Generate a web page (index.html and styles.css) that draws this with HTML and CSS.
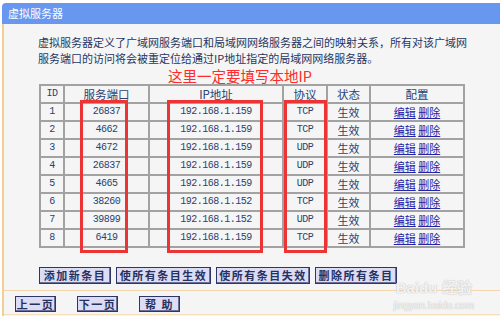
FILE: index.html
```html
<!doctype html>
<html lang="zh-CN">
<head>
  <meta charset="UTF-8">
  <title>虚拟服务器</title>
  <link rel="stylesheet" href="styles.css">
</head>
<body>
  <div class="panel">
    <div class="title">虚拟服务器</div>
    <div class="content">
      <p class="desc">虚拟服务器定义了广域网服务端口和局域网网络服务器之间的映射关系，所有对该广域网<br>服务端口的访问将会被重定位给通过IP地址指定的局域网网络服务器。</p>
      <div class="table-wrap">
        <table class="list">
          <colgroup>
            <col style="width:24px"><col style="width:85px"><col style="width:134px">
            <col style="width:44px"><col style="width:43px"><col style="width:94px">
          </colgroup>
          <tr class="head"><th class="num">ID</th><th>服务端口</th><th>IP地址</th><th>协议</th><th>状态</th><th>配置</th></tr>
          <tr><td class="num">1</td><td class="num">26837</td><td class="num">192.168.1.159</td><td class="num">TCP</td><td>生效</td><td><a href="#">编辑</a> <a href="#">删除</a></td></tr>
          <tr><td class="num">2</td><td class="num">4662</td><td class="num">192.168.1.159</td><td class="num">TCP</td><td>生效</td><td><a href="#">编辑</a> <a href="#">删除</a></td></tr>
          <tr><td class="num">3</td><td class="num">4672</td><td class="num">192.168.1.159</td><td class="num">UDP</td><td>生效</td><td><a href="#">编辑</a> <a href="#">删除</a></td></tr>
          <tr><td class="num">4</td><td class="num">26837</td><td class="num">192.168.1.159</td><td class="num">UDP</td><td>生效</td><td><a href="#">编辑</a> <a href="#">删除</a></td></tr>
          <tr><td class="num">5</td><td class="num">4665</td><td class="num">192.168.1.159</td><td class="num">UDP</td><td>生效</td><td><a href="#">编辑</a> <a href="#">删除</a></td></tr>
          <tr><td class="num">6</td><td class="num">38260</td><td class="num">192.168.1.152</td><td class="num">TCP</td><td>生效</td><td><a href="#">编辑</a> <a href="#">删除</a></td></tr>
          <tr><td class="num">7</td><td class="num">39899</td><td class="num">192.168.1.152</td><td class="num">UDP</td><td>生效</td><td><a href="#">编辑</a> <a href="#">删除</a></td></tr>
          <tr><td class="num">8</td><td class="num">6419</td><td class="num">192.168.1.159</td><td class="num">TCP</td><td>生效</td><td><a href="#">编辑</a> <a href="#">删除</a></td></tr>
        </table>
        <div class="note">这里一定要填写本地IP</div>
        <div class="mark mark-port"></div>
        <div class="mark mark-ip"></div>
        <div class="mark mark-proto"></div>
      </div>
      <div class="actions">
        <button class="btn btn-add">添加新条目</button>
        <button class="btn btn-on">使所有条目生效</button>
        <button class="btn btn-off">使所有条目失效</button>
        <button class="btn btn-del">删除所有条目</button>
      </div>
      <div class="pager">
        <button class="btn small">上一页</button>
        <button class="btn small">下一页</button>
        <button class="btn small">帮 助</button>
      </div>
      <div class="watermark">
        <span class="wm-logo">Baidu 经验</span>
        <span class="wm-url">jingyan.baidu.com</span>
      </div>
    </div>
  </div>
</body>
</html>
```
FILE: styles.css
```css
*{margin:0;
  padding:0;}
body{background:#fff;
     font-family:"Noto Sans CJK SC","Liberation Sans",sans-serif;
     color:#24386a;
     width:500px;
     height:316px;
     overflow:hidden;}
.panel{margin:3px 0 0 2px;}
.title{height:21px;
       line-height:21px;
       background:#6797ee;
       color:#fff;
       font-size:11px;
       padding-left:6px;
       border-radius:4px 0 0 0;}
.content{position:relative;
         background:#f5f5f5;
         border-left:2px solid #f3cf98;
         height:292px;}
.desc{padding:10px 0 0 34px;
      font-size:11px;
      line-height:16px;
      color:#26355f;}
.table-wrap{position:relative;
            margin:18px 0 0 35px;
            width:424px;}
.list{border-collapse:collapse;
      table-layout:fixed;
      width:424px;
      font-size:11px;
      color:#2a4272;}
.list th,.list td{border:2px solid #a2a2a2;
                  height:16px;
                  line-height:16px;
                  text-align:center;
                  font-weight:normal;
                  padding:0;}
.list .num{font-family:"Liberation Mono",monospace;
           font-size:10px;
           letter-spacing:-0.5px;}
.list th{font-size:11.5px;}
.list a{color:#2323a8;
        text-decoration:underline;}
.note{position:absolute;
      left:129px;
      top:-16px;
      font-size:14.5px;
      line-height:16px;
      color:#ff2b2b;}
.mark{position:absolute;
      top:16px;
      height:147px;
      border:3px solid #ec3434;}
.mark-port{left:41px; width:42px;}
.mark-ip{left:128px; width:90px;}
.mark-proto{left:245px; width:37px;}
.actions{display:flex;
         gap:5px;
         margin:19px 0 0 35px;}
.btn{height:17px;
     padding:0;
     background:#dcdcf4;
     border:1px solid #2f3566;
     box-shadow:inset -1px -1px 0 #6c7098;
     font-family:"Noto Sans CJK SC",sans-serif;
     font-size:11px;
     font-weight:bold;
     letter-spacing:1.5px;
     color:#263160;
     line-height:15px;}
.btn-add{width:72px;}
.btn-on{width:95px;}
.btn-off{width:94px;}
.btn-del{width:82px;}
.pager{display:flex;
       gap:21px;
       margin-top:6px;
       padding:5px 0 0 11px;
       border-top:1px solid #f3d6aa;
       height:18px;
       border-bottom:1px solid #f6dfbb;}
.btn.small{width:41px;
           height:16px;}
.watermark{position:absolute;
           right:26px;
           bottom:5px;
           display:flex;
           flex-direction:column;
           align-items:center;
           color:rgba(255,255,255,0.8);
           text-shadow:0 0 1px #c4c4c4,0 0 1px #c4c4c4;
           font-family:"Liberation Sans",sans-serif;}
.wm-logo{font-size:15px;
         font-weight:bold;}
.wm-url{font-size:10px;
        margin-top:3px;}
```
